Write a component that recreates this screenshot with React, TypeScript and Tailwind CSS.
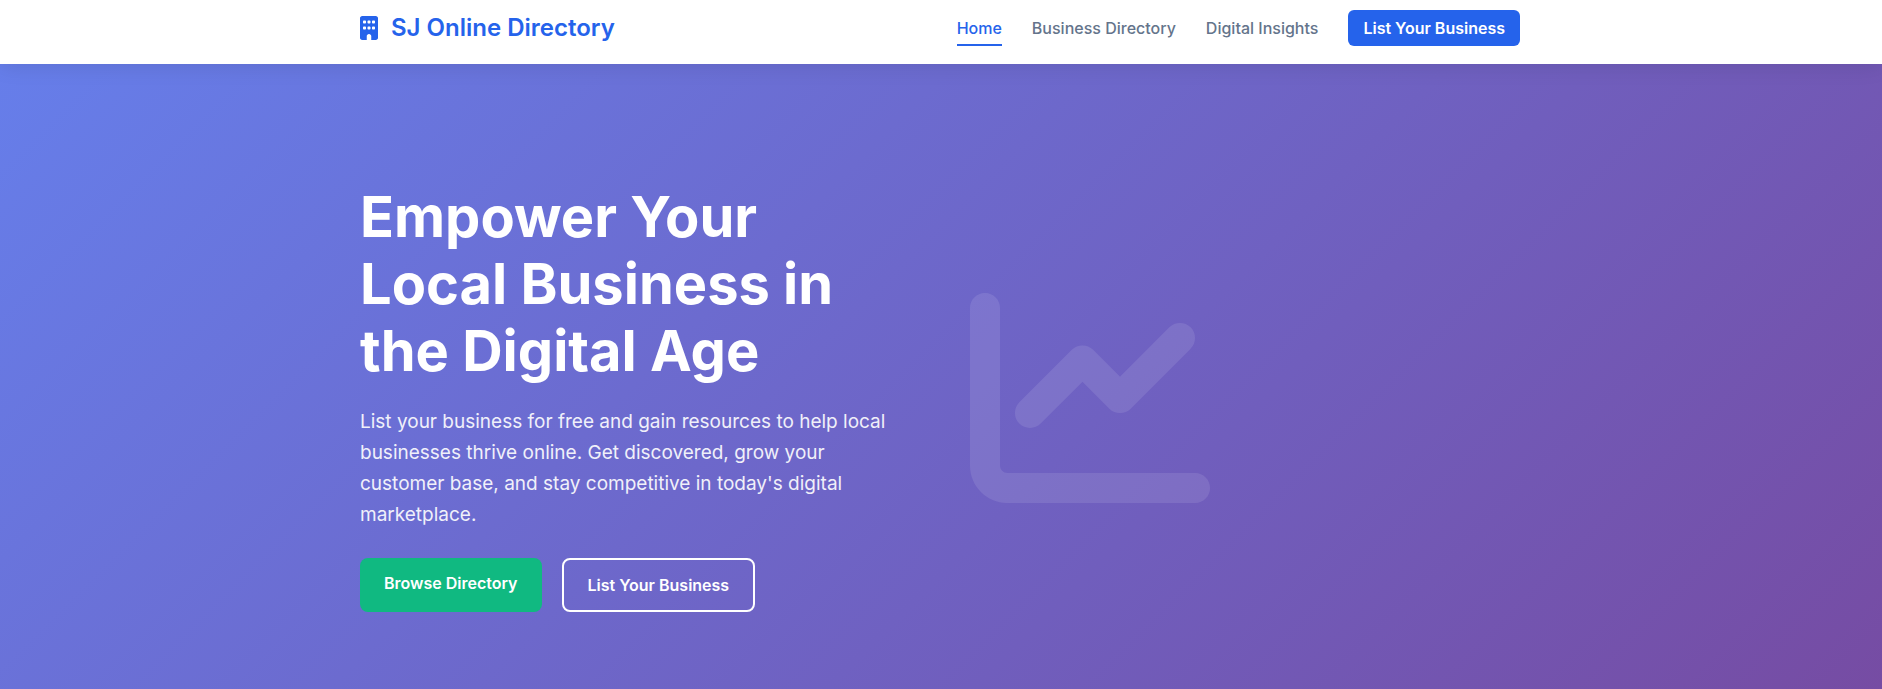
import { FaBuilding, FaChartLine } from "react-icons/fa6";

const navLinks = [
  { label: "Home", active: true },
  { label: "Business Directory", active: false },
  { label: "Digital Insights", active: false },
];

function Header() {
  return (
    <header className="relative z-10 bg-white pr-0.5 shadow-[0_2px_20px_rgba(0,0,0,0.1)]">
      <div className="mx-auto flex max-w-[1200px] items-center justify-between px-5 pt-2.5 pb-[18px]">
        <a href="#" className="flex items-center gap-[13px] text-2xl leading-9 font-semibold text-[#2563eb]">
          <FaBuilding aria-hidden="true" className="h-6 w-[18px]" />
          <span>SJ Online Directory</span>
        </a>
        <nav className="flex items-center gap-[30px] text-base leading-5 font-medium">
          {navLinks.map((link) => (
            <a
              key={link.label}
              href="#"
              className={
                link.active
                  ? "border-b-2 border-[#2563eb] pt-2 pb-1.5 text-[#2563eb]"
                  : "border-b-2 border-transparent pt-2 pb-1.5 text-[#64748b]"
              }
            >
              {link.label}
            </a>
          ))}
          <a href="#" className="rounded-md bg-[#2563eb] px-[15px] py-2 font-semibold text-white">
            List Your Business
          </a>
        </nav>
      </div>
    </header>
  );
}

function Hero() {
  return (
    <section className="bg-[linear-gradient(135deg,#667eea_0%,#764ba2_100%)] py-[120px] pr-0.5 text-white">
      <div className="mx-auto grid max-w-[1200px] grid-cols-2 items-center gap-[60px] px-5">
        <div>
          <h1 className="mb-[21px] text-[56px] leading-[67px] font-bold">
            Empower Your Local Business in the Digital Age
          </h1>
          <p className="mb-7 text-[19px] leading-[31px] opacity-90">
            List your business for free and gain resources to help local businesses thrive online. Get
            discovered, grow your customer base, and stay competitive in today's digital marketplace.
          </p>
          <div className="flex gap-5 text-base leading-[26px] font-semibold">
            <a href="#" className="rounded-lg bg-[#10b981] px-6 py-3">
              Browse Directory
            </a>
            <a href="#" className="rounded-lg border-2 border-white px-6 py-3">
              List Your Business
            </a>
          </div>
        </div>
        <FaChartLine aria-hidden="true" className="size-[240px] text-white/10" />
      </div>
    </section>
  );
}

export default function App() {
  return (
    <div className="font-['Inter',sans-serif]">
      <Header />
      <main>
        <Hero />
      </main>
    </div>
  );
}
